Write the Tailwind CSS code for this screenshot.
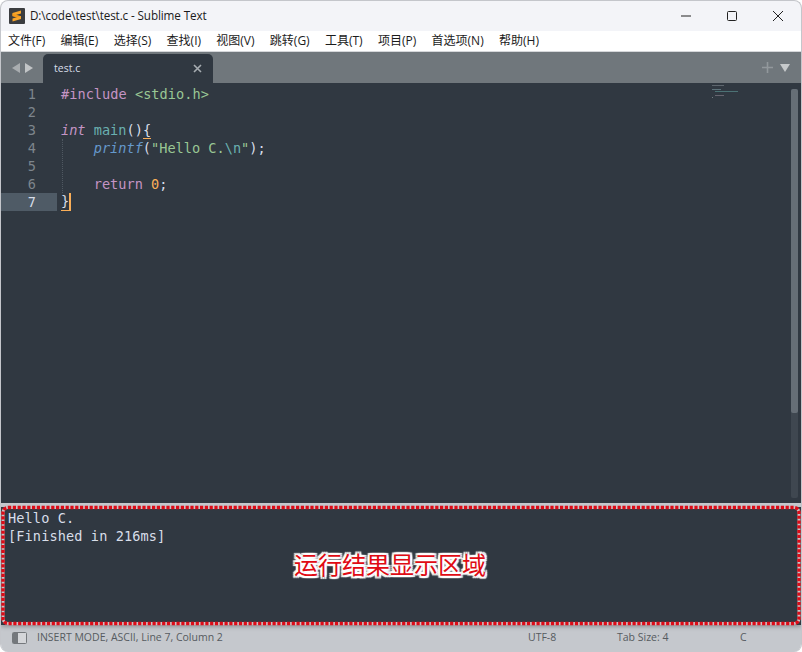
<!DOCTYPE html>
<html lang="zh">
<head>
    <meta charset="UTF-8">
    <title>D:\code\test\test.c - Sublime Text</title>
    <script src="https://cdn.jsdelivr.net/npm/@tailwindcss/browser@4"></script>
</head>
<body class="bg-white">
    <div class="w-[802px] h-[652px] flex flex-col overflow-hidden rounded-[8px] border-t border-x border-[#c4c6cb] bg-[#f3f4f8] font-['Open_Sans','Noto_Sans_CJK_SC',sans-serif] text-[#1b1b1b]">
        <!-- title bar -->
        <div class="h-[30px] flex items-center shrink-0">
            <svg class="ml-[8px] w-4 h-4" viewBox="0 0 16 16">
                <rect width="16" height="16" rx="1" fill="#3b3d40"/>
                <path d="M3.5 5 12 2.5V5.5L3.5 8Z" fill="#f8a52a"/>
                <path d="M3.5 5.5 12 8.2V11L3.5 8.3Z" fill="#f39a1c"/>
                <path d="M3.5 10.5 12 8V11L3.5 13.5Z" fill="#f8a52a"/>
            </svg>
            <span class="ml-[5px] text-[11.7px] tracking-[-0.12px]">D:\code\test\test.c - Sublime Text</span>
            <div class="ml-auto flex items-center">
                <svg class="w-[46px] h-[30px]" viewBox="0 0 46 30"><path d="M18 15H28" stroke="#222" fill="none"/></svg>
                <svg class="w-[46px] h-[30px]" viewBox="0 0 46 30"><rect x="18.5" y="10.5" width="9" height="9" rx="1" stroke="#222" fill="none"/></svg>
                <svg class="w-[46px] h-[30px]" viewBox="0 0 46 30"><path d="M18 10 28 20M28 10 18 20" stroke="#222" fill="none"/></svg>
            </div>
        </div>
        <!-- menu -->
        <div class="h-[20px] bg-white flex items-center text-[12px] pl-[7px] gap-[15.3px] shrink-0">
            <span>文件(F)</span><span>编辑(E)</span><span>选择(S)</span><span>查找(I)</span><span>视图(V)</span><span>跳转(G)</span><span>工具(T)</span><span>项目(P)</span><span>首选项(N)</span><span>帮助(H)</span>
        </div>
        <!-- tab bar -->
        <div class="h-[32px] bg-[#70777c] flex items-end shrink-0 border-t border-[#d5d7da]">
            <div class="h-full w-[42px] flex items-center pl-[11px] gap-[5px]">
                <span class="border-y-[5px] border-y-transparent border-r-[8px] border-r-[#a9adb0]"></span>
                <span class="border-y-[5px] border-y-transparent border-l-[8px] border-l-[#c2c5c7]"></span>
            </div>
            <div class="h-[29px] w-[170px] bg-[#303841] rounded-t-[5px] flex items-center justify-between pl-[11px] pr-[11px] text-[10.5px] text-[#d8dee9]">
                <span>test.c</span>
                <svg class="w-[9px] h-[9px]" viewBox="0 0 9 9"><path d="M1 1 8 8M8 1 1 8" stroke="#a6acb1" stroke-width="1.6"/></svg>
            </div>
            <div class="ml-auto h-full flex items-center pr-[11px] gap-[7px]">
                <svg class="w-[11px] h-[11px]" viewBox="0 0 11 11"><path d="M5.5 0V11M0 5.5H11" stroke="#92989c" stroke-width="1.6"/></svg>
                <span class="border-x-[5px] border-x-transparent border-t-[8px] border-t-[#c6c9cb]"></span>
            </div>
        </div>
        <!-- editor -->
        <div class="h-[420px] bg-[#303841] relative shrink-0 pt-[2px] font-['DejaVu_Sans_Mono',monospace] text-[13.6px] leading-[18px] text-[#d8dee9]">
            <div class="flex h-[18px]"><span class="w-[35px] text-right text-[#7d858c]">1</span><span class="ml-[25px] whitespace-pre tracking-[0.03px]"><span class="text-[#c594c5]">#include</span> <span class="text-[#99c794]">&lt;stdio.h&gt;</span></span></div>
            <div class="flex h-[18px]"><span class="w-[35px] text-right text-[#7d858c]">2</span></div>
            <div class="flex h-[18px]"><span class="w-[35px] text-right text-[#7d858c]">3</span><span class="ml-[25px] whitespace-pre"><span class="italic text-[#c594c5]">int</span> <span class="text-[#6ab0b0]">main</span>()<span class="border-b border-[#f9ae58]">{</span></span></div>
            <div class="flex h-[18px]"><span class="w-[35px] text-right text-[#7d858c]">4</span><span class="ml-[25px] whitespace-pre">    <span class="italic text-[#6699cc]">printf</span>(<span class="text-[#99c794]">"Hello C.</span><span class="text-[#6ab0b0]">\n</span><span class="text-[#99c794]">"</span>);</span></div>
            <div class="flex h-[18px]"><span class="w-[35px] text-right text-[#7d858c]">5</span></div>
            <div class="flex h-[18px]"><span class="w-[35px] text-right text-[#7d858c]">6</span><span class="ml-[25px] whitespace-pre">    <span class="text-[#c594c5]">return</span> <span class="text-[#f9ae58]">0</span>;</span></div>
            <div class="flex h-[18px]"><span class="w-[56px] pr-[21px] text-right bg-[#4f5b66] text-[#d8dee9]">7</span><span class="ml-[4px] border-b border-[#f9ae58] h-[18px] leading-[17px]">}</span><span class="w-[2px] h-[18px] bg-[#f9ae58]"></span></div>
            <!-- indent guide -->
            <div class="absolute left-[61px] top-[56px] h-[54px] border-l border-dotted border-[#4f5861]"></div>
            <!-- minimap -->
            <div class="absolute left-[711px] top-[2px] w-[26px] flex flex-col gap-[1px] opacity-60">
                <div class="w-[12px] h-[1px] bg-[#7d858c]"></div>
                <div class="h-[1px]"></div>
                <div class="w-[9px] h-[1px] bg-[#7d9aa0]"></div>
                <div class="w-[23px] h-[1px] bg-[#5f9a98] ml-[3px]"></div>
                <div class="h-[1px]"></div>
                <div class="w-[9px] h-[1px] bg-[#8c8490] ml-[3px]"></div>
                <div class="w-[1px] h-[1px] bg-[#a0a6ab]"></div>
            </div>
            <!-- scrollbar -->
            <div class="absolute right-[3px] top-[6px] w-[7px] h-[409px] rounded-[2px] bg-[#3f4750]">
                <div class="h-[324px] rounded-[2px] bg-[#666e76]"></div>
            </div>
        </div>
        <!-- panel edge -->
        <div class="h-[4px] bg-[#c5c8cd] shrink-0"></div>
        <!-- output -->
        <div class="h-[118px] bg-[#303841] relative shrink-0 pl-[7px] pt-[2px] font-['DejaVu_Sans_Mono',monospace] text-[13.6px] leading-[18px] tracking-[0.1px] text-[#d8dee9] shadow-[0_2px_4px_rgba(0,0,0,0.25)]">
            <div>Hello C.</div>
            <div>[Finished in 216ms]</div>
            <svg class="absolute left-0 top-0 overflow-visible" width="800" height="118" viewBox="0 0 800 118" fill="none">
                <rect x="2" y="0.5" width="796" height="116" rx="5" stroke="#cdbfc2" stroke-width="3"/>
                <rect x="2" y="0.5" width="796" height="116" rx="5" stroke="#dc0c18" stroke-width="3.4" stroke-dasharray="3.2 1.6"/>
            </svg>
            <div class="absolute left-[293px] top-[42px] text-[24px] leading-[30px] tracking-normal font-['Noto_Sans_CJK_SC',sans-serif] text-[#e00b14] [text-shadow:2px_0_1px_#fff,-2px_0_1px_#fff,0_2px_1px_#fff,0_-2px_1px_#fff,2px_2px_1px_#fff,-2px_2px_1px_#fff,2px_-2px_1px_#fff,-2px_-2px_1px_#fff]">运行结果显示区域</div>
        </div>
        <!-- status bar -->
        <div class="flex-1 bg-[#c5c8cd] flex items-center text-[10.5px] text-[#565b60] pb-[1px]">
            <svg class="ml-[11px] w-[15px] h-[12px]" viewBox="0 0 15 12"><rect x=".5" y=".5" width="14" height="11" rx="1" fill="#d4d6d9" stroke="#74787c"/><rect x="1" y="1" width="5" height="10" fill="#74787c"/></svg>
            <span class="ml-[10px]">INSERT MODE, ASCII, Line 7, Column 2</span>
            <span class="ml-auto w-[89px]">UTF-8</span>
            <span class="w-[123px]">Tab Size: 4</span>
            <span class="w-[61px]">C</span>
        </div>
    </div>
</body>
</html>
